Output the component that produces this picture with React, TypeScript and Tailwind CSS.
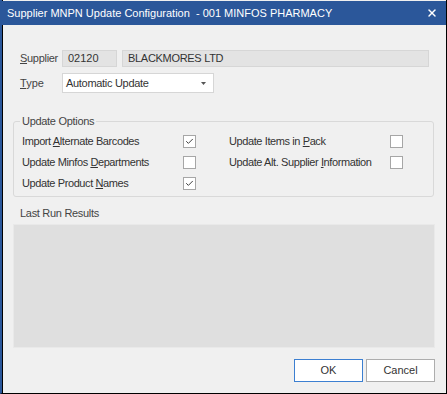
import { X, Check } from 'lucide-react';

function CheckBox({ checked }: { checked?: boolean }) {
  return (
    <div className="w-[13px] h-[13px] bg-white border border-[#a6a6a6] flex items-center justify-center shrink-0">
      {checked && <Check className="w-[9px] h-[9px] text-[#333]" strokeWidth={2.5} />}
    </div>
  );
}

function OptionRow({ label, checked, width }: { label: React.ReactNode; checked?: boolean; width: string }) {
  return (
    <div className="flex items-center h-[21px]">
      <span className={`${width} whitespace-nowrap tracking-[-0.4px]`}>{label}</span>
      <CheckBox checked={checked} />
    </div>
  );
}

export default function App() {
  return (
    <div
      className="w-[447px] h-[394px] bg-[#f0f0f0] flex flex-col border-l-2 border-l-[#2b579a] border-r border-r-black border-b border-b-black shadow-[inset_1px_0_0_#000] text-[11px] text-[#333]"
      style={{ fontFamily: '"Liberation Sans", Arial, sans-serif' }}
    >
      {/* Title bar */}
      <div className="h-[24px] mt-[1px] -ml-[2px] bg-[#2b579a] text-white flex items-center justify-between pl-[7px] pr-[8px] shrink-0">
        <span className="text-[11px] whitespace-nowrap">Supplier MNPN Update Configuration&nbsp; - 001 MINFOS PHARMACY</span>
        <X className="w-[12px] h-[12px]" strokeWidth={2.75} />
      </div>

      <div className="flex-1 flex flex-col px-[10px]">
        {/* Supplier */}
        <div className="flex items-center mt-[25px] h-[17px]">
          <span className="w-[50px] pl-[8px] text-[#444] tracking-[-0.3px]"><u>S</u>upplier</span>
          <div className="w-[55px] h-[17px] bg-[#e3e3e3] border border-[#d6d6d6] flex items-center px-[5px] text-[#333]">02120</div>
          <div className="flex-1 ml-[5px] mr-[7px] h-[17px] bg-[#e3e3e3] border border-[#d6d6d6] flex items-center px-[5px] text-[#333] tracking-[-0.3px]">BLACKMORES LTD</div>
        </div>

        {/* Type */}
        <div className="flex items-center mt-[6px] h-[20px]">
          <span className="w-[50px] pl-[8px] text-[#444]"><u>T</u>ype</span>
          <div className="w-[152px] h-[20px] bg-white border border-[#d6d6d6] flex items-center justify-between pl-[3px] pr-[7px] text-[#333]">
            <span className="tracking-[-0.3px]">Automatic Update</span>
            <svg width="5" height="3" viewBox="0 0 5 3">
              <path d="M0 0 H5 L2.5 3 Z" fill="#555" />
            </svg>
          </div>
        </div>

        {/* Update Options */}
        <div className="relative mt-[28px] h-[76px] border border-[#d9d9d9] rounded-[3px] mx-[1px] mr-[2px]">
          <span className="absolute -top-[9px] left-[6px] bg-[#f0f0f0] px-[2px] text-[#444] tracking-[-0.3px]">Update Options</span>
          <div className="flex pl-[8px] pt-[9px]">
            <div className="w-[207px]">
              <OptionRow width="w-[161px]" label={<>Import <u>A</u>lternate Barcodes</>} checked />
              <OptionRow width="w-[161px]" label={<>Update Minfos <u>D</u>epartments</>} />
              <OptionRow width="w-[161px]" label={<>Update Product <u>N</u>ames</>} checked />
            </div>
            <div>
              <OptionRow width="w-[161px]" label={<>Update Items in <u>P</u>ack</>} />
              <OptionRow width="w-[161px]" label={<>Update Alt. Supplier <u>I</u>nformation</>} />
            </div>
          </div>
        </div>

        {/* Last Run Results */}
        <div className="mt-[8px] pl-[8px] text-[#444] h-[16px] leading-[16px] tracking-[-0.3px]">Last Run Results</div>
        <div className="mt-[3px] mx-[1px] h-[124px] bg-[#dfdfdf] border border-[#e9e9e9]" />

        {/* Buttons */}
        <div className="flex justify-end gap-[3px] mt-[11px] mr-[1px]">
          <button className="w-[69px] h-[23px] bg-white border border-[#3c7fd1] text-[#333]">OK</button>
          <button className="w-[69px] h-[23px] bg-white border border-[#adadad] text-[#333]">Cancel</button>
        </div>
      </div>
    </div>
  );
}
